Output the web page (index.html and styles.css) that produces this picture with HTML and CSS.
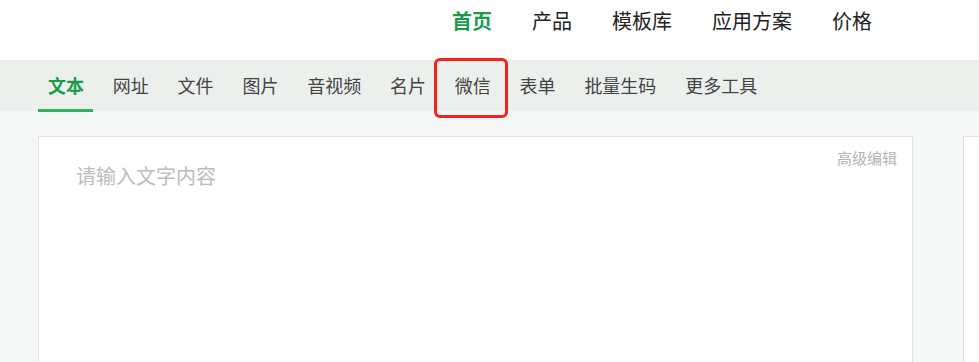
FILE: index.html
```html
<!DOCTYPE html>
<html lang="zh-CN">
<head>
  <meta charset="UTF-8" />
  <meta name="viewport" content="width=device-width, initial-scale=1.0"/>
  <title>文本二维码</title>
  <link rel="stylesheet" href="styles.css">
</head>
<body>

  <!-- Top navigation -->
  <header class="top-bar">
    <nav class="main-nav">
      <a class="active" href="#">首页</a>
      <a href="#">产品</a>
      <a href="#">模板库</a>
      <a href="#">应用方案</a>
      <a href="#">价格</a>
    </nav>
  </header>

  <!-- Generator type tabs -->
  <div class="tab-bar">
    <a class="tab active" href="#">文本</a>
    <a class="tab" href="#">网址</a>
    <a class="tab" href="#">文件</a>
    <a class="tab" href="#">图片</a>
    <a class="tab" href="#">音视频</a>
    <a class="tab" href="#">名片</a>
    <a class="tab marked" href="#">微信</a>
    <a class="tab" href="#">表单</a>
    <a class="tab" href="#">批量生码</a>
    <a class="tab" href="#">更多工具</a>
  </div>

  <main class="content">
    <div class="editor-card">
      <div class="editor-head">
        <a class="advanced" href="#">高级编辑</a>
      </div>
      <div class="placeholder">请输入文字内容</div>
    </div>
    <div class="side-panel"></div>
  </main>

</body>
</html>
```

FILE: styles.css
```css
html, body {
  margin: 0;
  height: 100%;
}

body {
  font-family: 'Noto Sans CJK SC', 'Noto Sans', sans-serif;
  background: #f5f7f6;
  color: #333;
  overflow: hidden;
}

a {
  text-decoration: none;
  color: inherit;
}

.top-bar {
  height: 60px;
  background: #fff;
}

.main-nav {
  display: flex;
  justify-content: flex-end;
  padding-right: 87px;
}

.main-nav a {
  font-size: 20px;
  line-height: 42px;
  padding: 0 20px;
  color: #222;
}

.main-nav a.active {
  color: #1a9b4b;
  font-weight: bold;
}

.tab-bar {
  display: flex;
  gap: 8.8px;
  height: 51px;
  padding-left: 38px;
  background: #ecf0ed;
}

.tab {
  position: relative;
  padding: 0 10px;
  font-size: 18px;
  line-height: 51px;
  color: #444;
}

.tab.active {
  color: #1a9b4b;
  font-weight: bold;
}

.tab.active::after {
  content: "";
  position: absolute;
  left: 0;
  right: 1px;
  bottom: -1px;
  height: 3px;
  background: #2db35c;
}

/* red highlight frame drawn over the tab */
.tab.marked::before {
  content: "";
  position: absolute;
  left: -11px;
  right: -7px;
  top: -2px;
  bottom: -7px;
  border: 3px solid #f5221b;
  border-radius: 6px;
}

.content {
  display: flex;
  gap: 50px;
  padding: 25px 0 0 38px;
  height: 100%;
}

.editor-card {
  flex: 0 0 875px;
  box-sizing: border-box;
  background: #fff;
  border: 1px solid #e1e3e2;
  padding: 0 15px 0 37px;
}

.editor-head {
  display: flex;
  justify-content: flex-end;
  padding-top: 11px;
  height: 20px;
}

.advanced {
  font-size: 15px;
  line-height: 20px;
  color: #b3b3b3;
}

.placeholder {
  font-size: 20px;
  line-height: 28px;
  color: #bcbcbc;
  margin-top: -6px;
}

.side-panel {
  flex: 0 0 300px;
  background: #fff;
  border: 1px solid #e1e3e2;
}
```
